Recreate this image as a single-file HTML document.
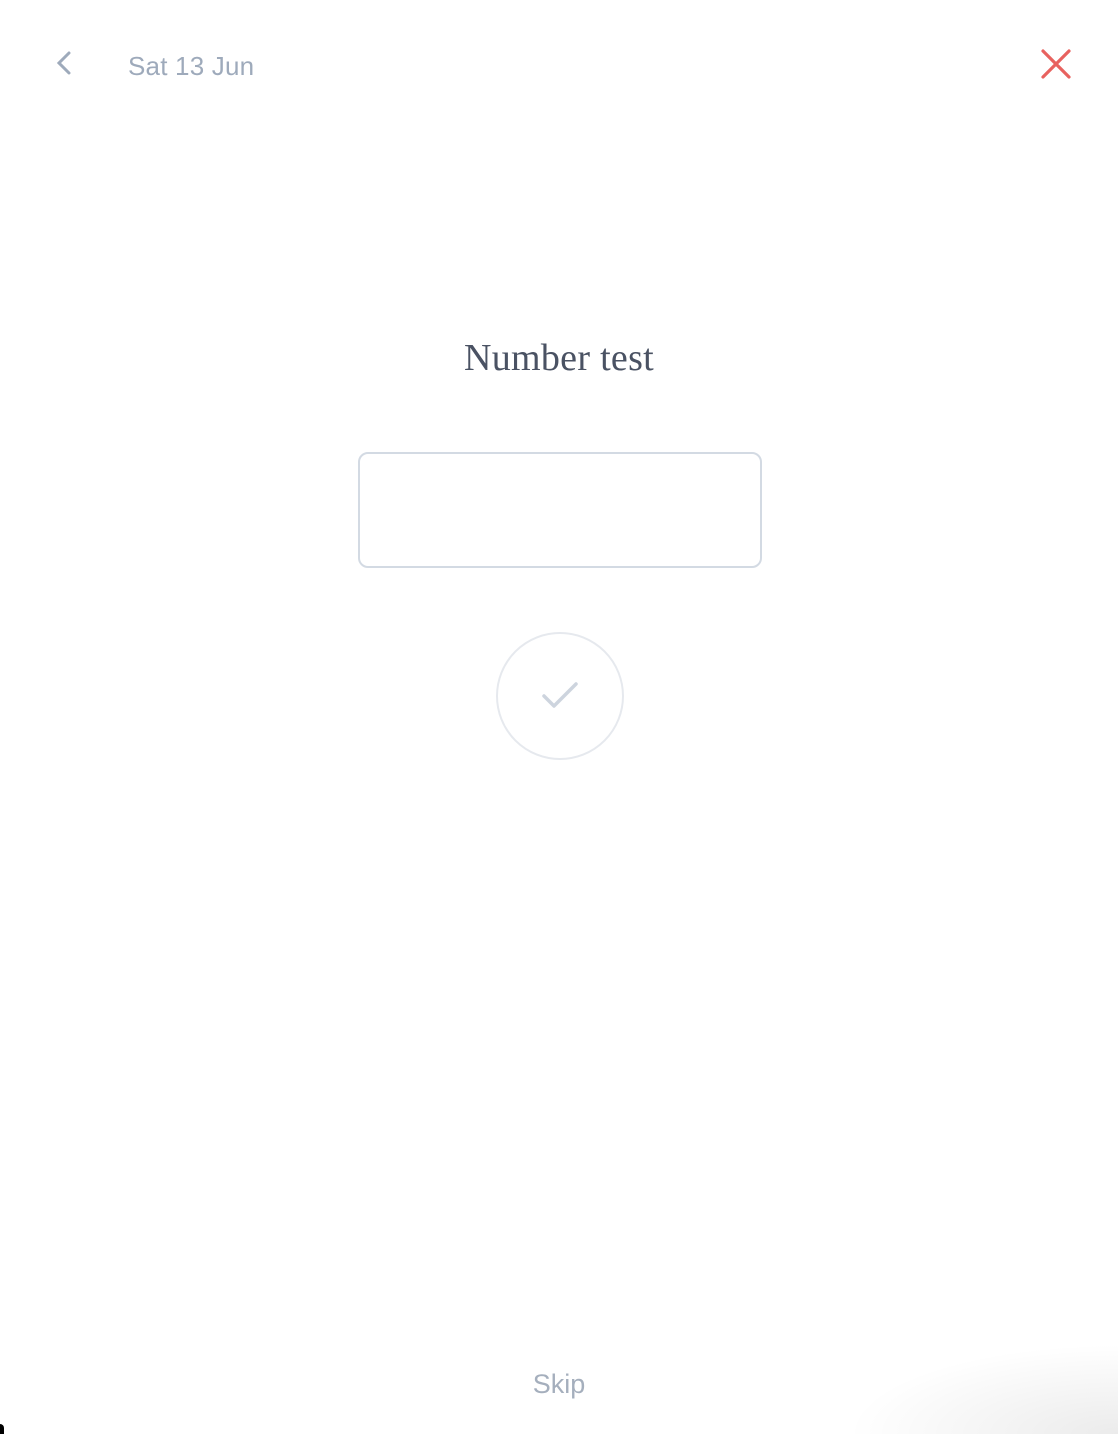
<!DOCTYPE html>
<html><head><meta charset="utf-8"><style>
html,body{margin:0;padding:0;width:1118px;height:1434px;overflow:hidden;background:#fff;font-family:"Liberation Sans",sans-serif;position:relative}
.date{position:absolute;left:128px;top:51px;font-size:26px;color:#9eaabb;letter-spacing:0.2px}
.title{position:absolute;left:0;width:1118px;top:336px;text-align:center;font-family:"Liberation Serif",serif;font-size:38px;color:#4a5263;letter-spacing:0.3px}
.box{position:absolute;left:358px;top:452px;width:400px;height:112px;border:2px solid #d3dae3;border-radius:10px}
.circ{position:absolute;left:496px;top:632px;width:124px;height:124px;border:2px solid #e6e9ee;border-radius:50%}
.skip{position:absolute;left:0;width:1118px;top:1369px;text-align:center;font-size:27px;color:#a5afbd}
.shade{position:absolute;left:818px;top:1334px;width:300px;height:100px;background:radial-gradient(ellipse 270px 90px at 100% 100%,rgba(0,0,0,0.08),rgba(0,0,0,0.03) 60%,rgba(0,0,0,0) 100%)}
.corner{position:absolute;left:0;top:1424px;width:4px;height:10px;background:#000;border-top-right-radius:8px}
</style></head><body>
<svg style="position:absolute;left:54px;top:51px" width="20" height="26" viewBox="0 0 20 26"><path d="M15 2 L5 12 L15 22" fill="none" stroke="#9eaabb" stroke-width="3" stroke-linecap="round"/></svg>
<div class="date">Sat 13 Jun</div>
<svg style="position:absolute;left:1040px;top:48px" width="32" height="32" viewBox="0 0 32 32"><path d="M3 3 L29 29 M29 3 L3 29" stroke="#e8625f" stroke-width="3.2" stroke-linecap="round"/></svg>
<div class="title">Number test</div>
<div class="box"></div>
<div class="circ"></div>
<svg style="position:absolute;left:540px;top:680px" width="40" height="32" viewBox="0 0 40 32"><path d="M4 16 L14 26 L36 4" fill="none" stroke="#cdd4de" stroke-width="3.5" stroke-linecap="round" stroke-linejoin="round"/></svg>
<div class="shade"></div>
<div class="skip">Skip</div>
<div class="corner"></div>
</body></html>
